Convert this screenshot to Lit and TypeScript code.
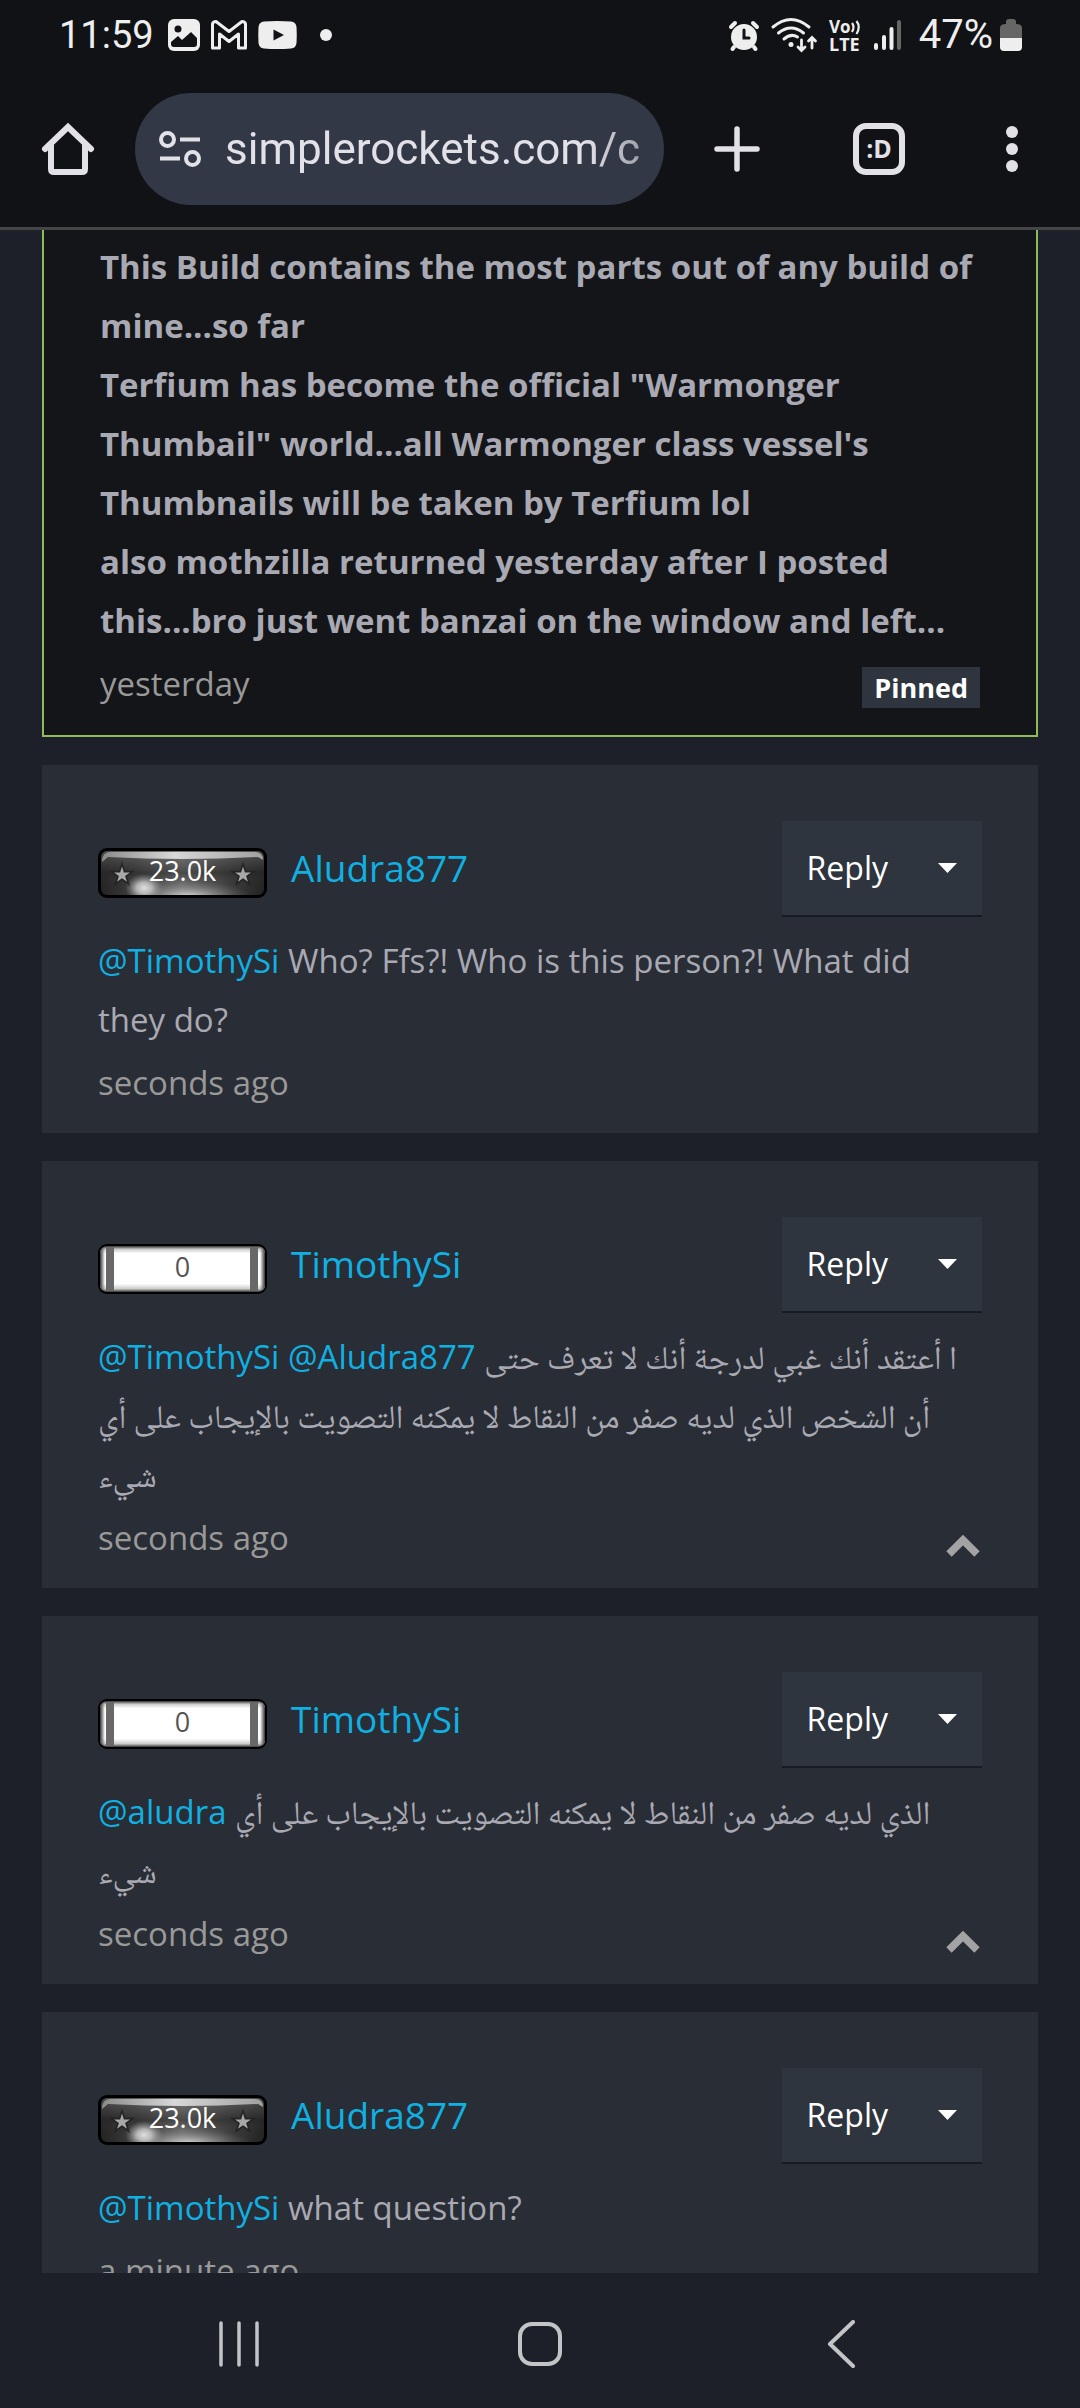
import { LitElement, html, css, svg, nothing } from "lit";
import { customElement, property } from "lit/decorators.js";

interface Comment {
  author: string;
  points: string;
  starred: boolean;
  mentions: string[];
  lines: string[];
  arabic: boolean;
  time: string;
  votable: boolean;
}

const COMMENTS: Comment[] = [
  {
    author: "Aludra877",
    points: "23.0k",
    starred: true,
    mentions: ["@TimothySi"],
    lines: ["Who? Ffs?! Who is this person?! What did they do?"],
    arabic: false,
    time: "seconds ago",
    votable: false,
  },
  {
    author: "TimothySi",
    points: "0",
    starred: false,
    mentions: ["@TimothySi", "@Aludra877"],
    lines: [
      "ا أعتقد أنك غبي لدرجة أنك لا تعرف حتى",
      "أن الشخص الذي لديه صفر من النقاط لا يمكنه التصويت بالإيجاب على أي",
      "شيء",
    ],
    arabic: true,
    time: "seconds ago",
    votable: true,
  },
  {
    author: "TimothySi",
    points: "0",
    starred: false,
    mentions: ["@aludra"],
    lines: ["الذي لديه صفر من النقاط لا يمكنه التصويت بالإيجاب على أي", "شيء"],
    arabic: true,
    time: "seconds ago",
    votable: true,
  },
  {
    author: "Aludra877",
    points: "23.0k",
    starred: true,
    mentions: ["@TimothySi"],
    lines: ["what question?"],
    arabic: false,
    time: "a minute ago",
    votable: false,
  },
];

const PINNED_LINES = [
  "This Build contains the most parts out of any build of mine...so far",
  "Terfium has become the official \"Warmonger Thumbail\" world...all Warmonger class vessel's Thumbnails will be taken by Terfium lol",
  "also mothzilla returned yesterday after I posted this...bro just went banzai on the window and left...",
];

const STAR = "M0-12 2.700-3.700H11.400L4.400 1.400 7.100 9.700 0 4.600-7.100 9.700-4.400 1.400-11.400-3.700H-2.700Z";

@customElement("rank-badge")
export class RankBadge extends LitElement {
  @property() points = "";
  @property({ type: Boolean }) starred = false;

  static styles = css`
    :host {
      display: grid;
      flex: none;
      width: 169px;
      height: 50px;
    }
    .plate,
    .points {
      grid-area: 1 / 1;
    }
    .points {
      font: 27px/46px "Open Sans", "Noto Sans", sans-serif;
      text-align: center;
      color: #555;
    }
    .points.light {
      color: #fff;
    }
  `;

  private darkPlate() {
    return svg`
      <defs>
        <linearGradient id="body" x1="0" x2="1" y1="0" y2="0">
          <stop offset="0" stop-color="#1c1c1c"/>
          <stop offset=".2" stop-color="#3a3a3a"/>
          <stop offset=".5" stop-color="#777"/>
          <stop offset=".8" stop-color="#3a3a3a"/>
          <stop offset="1" stop-color="#1c1c1c"/>
        </linearGradient>
        <linearGradient id="depth" x1="0" x2="0" y1="0" y2="1">
          <stop offset="0" stop-color="#777" stop-opacity=".5"/>
          <stop offset=".5" stop-color="#2c2c2c" stop-opacity=".6"/>
          <stop offset=".75" stop-color="#444" stop-opacity=".2"/>
          <stop offset="1" stop-color="#555" stop-opacity=".1"/>
        </linearGradient>
        <linearGradient id="gloss" x1="0" x2="1" y1="0" y2="0">
          <stop offset="0" stop-color="#8a8a8a"/>
          <stop offset=".45" stop-color="#d8d8d8"/>
          <stop offset="1" stop-color="#a0a0a0"/>
        </linearGradient>
        <radialGradient id="shine">
          <stop offset="0" stop-color="#e0e0e0"/>
          <stop offset=".4" stop-color="#cfcfcf" stop-opacity=".8"/>
          <stop offset="1" stop-color="#999" stop-opacity="0"/>
        </radialGradient>
        <radialGradient id="floor">
          <stop offset="0" stop-color="#ddd" stop-opacity=".9"/>
          <stop offset="1" stop-color="#777" stop-opacity="0"/>
        </radialGradient>
        <clipPath id="inner"><rect x="3" y="3" width="163" height="44" rx="6"/></clipPath>
      </defs>
      <rect width="169" height="50" rx="9" fill="#000"/>
      <g clip-path="url(#inner)">
        <rect x="3" y="3" width="163" height="44" fill="url(#body)"/>
        <rect x="3" y="3" width="163" height="44" fill="url(#depth)"/>
        <ellipse cx="90" cy="48" rx="62" ry="15" fill="url(#floor)"/>
        <ellipse cx="46" cy="40" rx="19" ry="14" fill="url(#shine)"/>
        <path d="M4 14Q4 4 12 4H157Q165 4 165 12L160 9Q84 13 10 9Z" fill="url(#gloss)"/>
      </g>
      <g transform="translate(24 27)">
        <path d=${STAR} transform="scale(1.150)" fill="#222" fill-opacity=".85"/><path d=${STAR} transform="scale(.7)" fill="#a8a8a8"/>
      </g>
      <g transform="translate(145 27)">
        <path d=${STAR} transform="scale(1.150)" fill="#222" fill-opacity=".85"/><path d=${STAR} transform="scale(.7)" fill="#a8a8a8"/>
      </g>`;
  }

  private lightPlate() {
    return svg`
      <defs>
        <linearGradient id="edge" x1="0" x2="0" y1="0" y2="1">
          <stop offset="0" stop-color="#333"/>
          <stop offset=".07" stop-color="#ccc"/>
          <stop offset=".16" stop-color="#fff"/>
          <stop offset=".82" stop-color="#fff"/>
          <stop offset=".93" stop-color="#ccc"/>
          <stop offset="1" stop-color="#333"/>
        </linearGradient>
        <linearGradient id="cap" x1="0" x2="1" y1="0" y2="0">
          <stop offset="0" stop-color="#333"/>
          <stop offset="1" stop-color="#333" stop-opacity="0"/>
        </linearGradient>
        <linearGradient id="capEnd" x1="1" x2="0" y1="0" y2="0">
          <stop offset="0" stop-color="#333"/>
          <stop offset="1" stop-color="#333" stop-opacity="0"/>
        </linearGradient>
        <clipPath id="inner"><rect x="2" y="2" width="165" height="46" rx="7"/></clipPath>
      </defs>
      <rect width="169" height="50" rx="9" fill="#000"/>
      <g clip-path="url(#inner)">
        <rect x="2" y="2" width="165" height="46" fill="url(#edge)"/>
        <rect x="2" y="2" width="5" height="46" fill="url(#cap)"/>
        <rect x="162" y="2" width="5" height="46" fill="url(#capEnd)"/>
        <rect x="8" y="3" width="8" height="44" fill="#686868"/>
        <rect x="152" y="3" width="8" height="44" fill="#686868"/>
      </g>`;
  }

  render() {
    return html`
      <svg class="plate" width="169" height="50" viewBox="0 0 169 50" aria-hidden="true">
        ${this.starred ? this.darkPlate() : this.lightPlate()}
      </svg>
      <span class="points ${this.starred ? "light" : ""}">${this.points}</span>
    `;
  }
}

@customElement("status-bar")
export class StatusBar extends LitElement {
  static styles = css`
    :host {
      display: flex;
      justify-content: space-between;
      align-items: center;
      height: 70px;
      padding: 0 58px 0 59px;
      font: 40px/46px Roboto, "Noto Sans", sans-serif;
      color: #eee;
    }
    .group {
      display: flex;
      align-items: center;
    }
    .clock {
      margin-right: 14px;
      font-size: 38px;
    }
    .notices {
      gap: 11px;
    }
    .dot {
      margin-left: 12px;
    }
    .signals {
      gap: 12px;
    }
    .battery {
      display: flex;
      align-items: center;
      gap: 7px;
      margin-left: 6px;
    }
    svg {
      display: block;
      overflow: visible;
    }
  `;

  render() {
    return html`
      <div class="group">
        <span class="clock">11:59</span>
        <div class="group notices">
          <svg width="32" height="32" viewBox="0 0 32 32" aria-hidden="true">
            <rect width="32" height="32" rx="6" fill="#eee" />
            <circle cx="10" cy="10" r="3.500" fill="#111215" />
            <path d="M3 23 10 17 14 21 23 13 29 19V25Q29 28 26 28H6Q3 28 3 25Z" fill="#111215" />
          </svg>
          <svg width="36" height="32" viewBox="0 0 36 32" fill="none" stroke="#eee" stroke-width="3" stroke-linejoin="round" aria-hidden="true">
            <path d="M1.500 5Q2 2.500 5 2.500L18 12.500 31 2.500Q34 2.500 34.500 5V29H27.500V15L18 22.500 8.500 15V29H1.500Z" />
          </svg>
          <svg width="39" height="32" viewBox="0 0 39 32" aria-hidden="true">
            <path d="M6 2.500Q19 1.500 33 2.500 38 3 38.500 8 39 16 38.500 24 38 29 33 29.500 19 30.500 6 29.500 1 29 .5 24 0 16 .5 8 1 3 6 2.500Z" fill="#eee" />
            <path d="M15.500 10.500V21.500L26 16Z" fill="#111215" />
          </svg>
          <svg class="dot" width="12" height="12" viewBox="0 0 12 12" aria-hidden="true"><circle cx="6" cy="6" r="6" fill="#eee" /></svg>
        </div>
      </div>
      <div class="group signals">
        <svg width="30" height="32" viewBox="0 0 30 32" stroke="#eee" stroke-linecap="round" aria-hidden="true">
          <circle cx="15" cy="18" r="13" fill="#eee" stroke="none" />
          <path d="M2 8 6 4M28 8 24 4M5 28 3.500 30M25 28 26.500 30" stroke-width="4" />
          <path d="M15 11V19H20" fill="none" stroke="#111215" stroke-width="3" />
        </svg>
        <svg width="46" height="36" viewBox="0 0 46 36" fill="none" stroke="#eee" stroke-width="3" stroke-linecap="round" aria-hidden="true">
          <path d="M2 10Q20-5 38 10M7.500 16Q20 6 32.500 16M13 22Q20 16 26.500 20" />
          <circle cx="20" cy="27.500" r="2.500" fill="#eee" stroke="none" />
          <path d="M30.500 23V33M27 30 30.500 33.500 34 30M41 31V21M37.500 24 41 20.500 44.500 24" stroke-width="2.800" />
        </svg>
        <svg width="32" height="34" viewBox="0 0 32 34" fill="#eee" font-family="Open Sans" font-weight="700" aria-hidden="true">
          <text x="0" y="15" font-size="17">Vo</text>
          <text x="0" y="33" font-size="18">LTE</text>
          <path d="M23 5Q26 9 23 14M27.500 3Q32 9 27.500 16" fill="none" stroke="#eee" stroke-width="2.200" />
        </svg>
        <svg width="28" height="32" viewBox="0 0 28 32" stroke="#eee" stroke-width="4" stroke-linecap="round" aria-hidden="true">
          <path d="M3 26V29M11 18V29M18.500 10V29" />
          <path d="M26 3V29" stroke="#666" />
        </svg>
        <span class="battery">
          47%
          <svg width="22" height="34" viewBox="0 0 22 34" aria-hidden="true">
            <path d="M6 6V4Q6 1 9 1H13Q16 1 16 4V6Q22 6 22 10V20H0V10Q0 6 6 6Z" fill="#666" />
            <path d="M0 20H22V29Q22 33 18 33H4Q0 33 0 29Z" fill="#eee" />
          </svg>
        </span>
      </div>
    `;
  }
}

@customElement("browser-toolbar")
export class BrowserToolbar extends LitElement {
  static styles = css`
    :host {
      display: flex;
      align-items: center;
      height: 157px;
      padding: 0 48px 0 40px;
      border-bottom: 3px solid #444546;
    }
    button {
      display: grid;
      place-items: center;
      flex: none;
      width: 56px;
      height: 96px;
      padding: 0;
      border: 0;
      background: none;
      color: #e3e1e8;
    }
    svg {
      display: block;
      flex: none;
    }
    .address {
      display: flex;
      align-items: center;
      flex: 1;
      gap: 24px;
      min-width: 0;
      height: 112px;
      margin: 0 45px 0 39px;
      padding: 0 20px 0 24px;
      box-sizing: border-box;
      border-radius: 56px;
      background: #323846;
    }
    .url {
      flex: 1;
      min-width: 0;
      padding: 0;
      border: 0;
      outline: 0;
      background: none;
      color: #e3e1e8;
      font: 44px/60px Roboto, "Noto Sans", sans-serif;
      mask-image: linear-gradient(to right, #000 86%, #0009 100%);
    }
    .actions {
      display: flex;
      justify-content: space-between;
      width: 323px;
    }
    .menu {
      width: 40px;
    }
  `;

  render() {
    return html`
      <button aria-label="Home">
        <svg width="54" height="54" viewBox="0 0 54 54" fill="none" stroke="currentColor" stroke-width="6" stroke-linejoin="round" aria-hidden="true">
          <path d="M4 27 27 5 50 27" stroke-linejoin="miter" stroke-linecap="round" />
          <path d="M10 23V47Q10 50 13 50H41Q44 50 44 47V23" />
        </svg>
      </button>
      <div class="address">
        <svg width="42" height="38" viewBox="0 0 42 38" fill="none" stroke="#e3e1e8" stroke-width="4" aria-hidden="true">
          <circle cx="8.500" cy="9.500" r="6.500" />
          <circle cx="33.500" cy="28.500" r="6.500" />
          <path d="M21 9.500H41M1 28.500H21" />
        </svg>
        <input class="url" type="text" aria-label="Address" .value=${"simplerockets.com/c"} />
      </div>
      <div class="actions">
        <button aria-label="New tab">
          <svg width="46" height="46" viewBox="0 0 46 46" stroke="currentColor" stroke-width="5.500" stroke-linecap="round" aria-hidden="true">
            <path d="M23 3V43M3 23H43" />
          </svg>
        </button>
        <button aria-label="Tabs">
          <svg width="52" height="52" viewBox="0 0 52 52" aria-hidden="true">
            <rect x="3" y="3" width="46" height="46" rx="10" fill="none" stroke="currentColor" stroke-width="6" />
            <text x="26" y="35" text-anchor="middle" font-family="Open Sans" font-size="25" font-weight="700" fill="currentColor">:D</text>
          </svg>
        </button>
        <button class="menu" aria-label="Menu">
          <svg width="12" height="48" viewBox="0 0 12 48" fill="currentColor" aria-hidden="true">
            <circle cx="6" cy="7" r="6" />
            <circle cx="6" cy="24" r="6" />
            <circle cx="6" cy="41" r="6" />
          </svg>
        </button>
      </div>
    `;
  }
}

@customElement("app-root")
export class AppRoot extends LitElement {
  static styles = css`
    :host {
      display: flex;
      flex-direction: column;
      height: 100vh;
      overflow: hidden;
      background: #1d2028;
      color: #a9a9b3;
      font: 33px/59px "Open Sans", "Noto Sans", sans-serif;
    }
    .chrome {
      flex: none;
      background: #111215;
    }
    .feed {
      display: flex;
      flex-direction: column;
      flex: 1;
      gap: 28px;
      min-height: 0;
      padding: 0 42px;
      overflow: hidden;
    }
    .card {
      flex: none;
      padding: 56px 56px 21px;
      background: #292d35;
    }
    .card.pinned {
      padding-top: 7px;
      padding-bottom: 22px;
      border: 2px solid #8fbc5a;
      border-top: 0;
      background: #141518;
    }
    p {
      margin: 0;
    }
    .pinned p {
      font-weight: 700;
    }
    a {
      color: #10b0e2;
      text-decoration: none;
    }
    .top {
      display: flex;
      justify-content: space-between;
      margin-bottom: 14px;
    }
    .who {
      display: flex;
      align-items: flex-start;
      gap: 24px;
      padding-top: 27px;
    }
    .name {
      font-size: 37px;
      line-height: 40px;
    }
    .split {
      display: flex;
    }
    .split button {
      height: 96px;
      padding: 0 25px;
      border: 0;
      border-bottom: 2px solid #181b20;
      background: #2e353f;
      color: #fff;
      font: 32px/44px "Open Sans", "Noto Sans", sans-serif;
    }
    .split svg {
      display: block;
    }
    .arabic {
      font-family: "Noto Naskh Arabic", "Noto Sans Arabic", "Noto Sans", "DejaVu Sans", sans-serif;
      line-height: 33px;
    }
    .meta {
      display: flex;
      justify-content: space-between;
      align-items: flex-end;
      margin-top: 4px;
      color: #999;
    }
    .tag {
      margin-bottom: 5px;
      padding: 0 12px;
      background: #2e353f;
      color: #fff;
      font-size: 27px;
      font-weight: 700;
      line-height: 41px;
    }
    .vote {
      padding: 0 2px 10px;
      border: 0;
      background: none;
      color: #a3a3a3;
    }
    .vote svg {
      display: block;
    }
    .system {
      display: grid;
      grid-template-columns: repeat(3, 1fr);
      flex: none;
      height: 135px;
      padding: 0 88px;
      background: #1d2028;
    }
    .system button {
      display: grid;
      place-items: center;
      padding: 6px 0 0;
      border: 0;
      background: none;
      color: #c3c4c6;
    }
  `;

  private card(c: Comment) {
    return html`
      <article class="card">
        <div class="top">
          <div class="who">
            <rank-badge .points=${c.points} .starred=${c.starred}></rank-badge>
            <a class="name" href="#">${c.author}</a>
          </div>
          <div class="split">
            <button>Reply</button>
            <button aria-label="More actions">
              <svg width="19" height="10" viewBox="0 0 19 10" aria-hidden="true"><path d="M0 0H19L9.500 10Z" fill="#fff" /></svg>
            </button>
          </div>
        </div>
        <p>
          ${c.mentions.map((m) => html`<a href="#">${m}</a> `)}${c.lines.map(
            (line, i) => html`${i ? html`<br />` : nothing}<span class=${c.arabic ? "arabic" : "latin"}>${line}</span>`,
          )}
        </p>
        <div class="meta">
          <time>${c.time}</time>
          ${c.votable
            ? html`<button class="vote" aria-label="Upvote">
                <svg width="34" height="22" viewBox="0 0 34 22" fill="none" stroke="currentColor" stroke-width="7.500" aria-hidden="true">
                  <path d="M3 19 17 5 31 19" />
                </svg>
              </button>`
            : nothing}
        </div>
      </article>
    `;
  }

  render() {
    return html`
      <header class="chrome">
        <status-bar></status-bar>
        <browser-toolbar></browser-toolbar>
      </header>
      <main class="feed">
        <article class="card pinned">
          ${PINNED_LINES.map((line) => html`<p>${line}</p>`)}
          <div class="meta">
            <time>yesterday</time>
            <span class="tag">Pinned</span>
          </div>
        </article>
        ${COMMENTS.map((c) => this.card(c))}
      </main>
      <nav class="system" aria-label="System">
        <button aria-label="Recent apps">
          <svg width="42" height="46" viewBox="0 0 42 46" stroke="currentColor" stroke-width="3.500" stroke-linecap="round" aria-hidden="true">
            <path d="M3 2V44M21 2V44M39 2V44" />
          </svg>
        </button>
        <button aria-label="Home screen">
          <svg width="46" height="46" viewBox="0 0 46 46" fill="none" stroke="currentColor" stroke-width="4" aria-hidden="true">
            <rect x="3" y="3" width="40" height="40" rx="12" />
          </svg>
        </button>
        <button aria-label="Back">
          <svg width="28" height="48" viewBox="0 0 28 48" fill="none" stroke="currentColor" stroke-width="4" stroke-linecap="round" stroke-linejoin="round" aria-hidden="true">
            <path d="M26 2 3 24 26 46" />
          </svg>
        </button>
      </nav>
    `;
  }
}
